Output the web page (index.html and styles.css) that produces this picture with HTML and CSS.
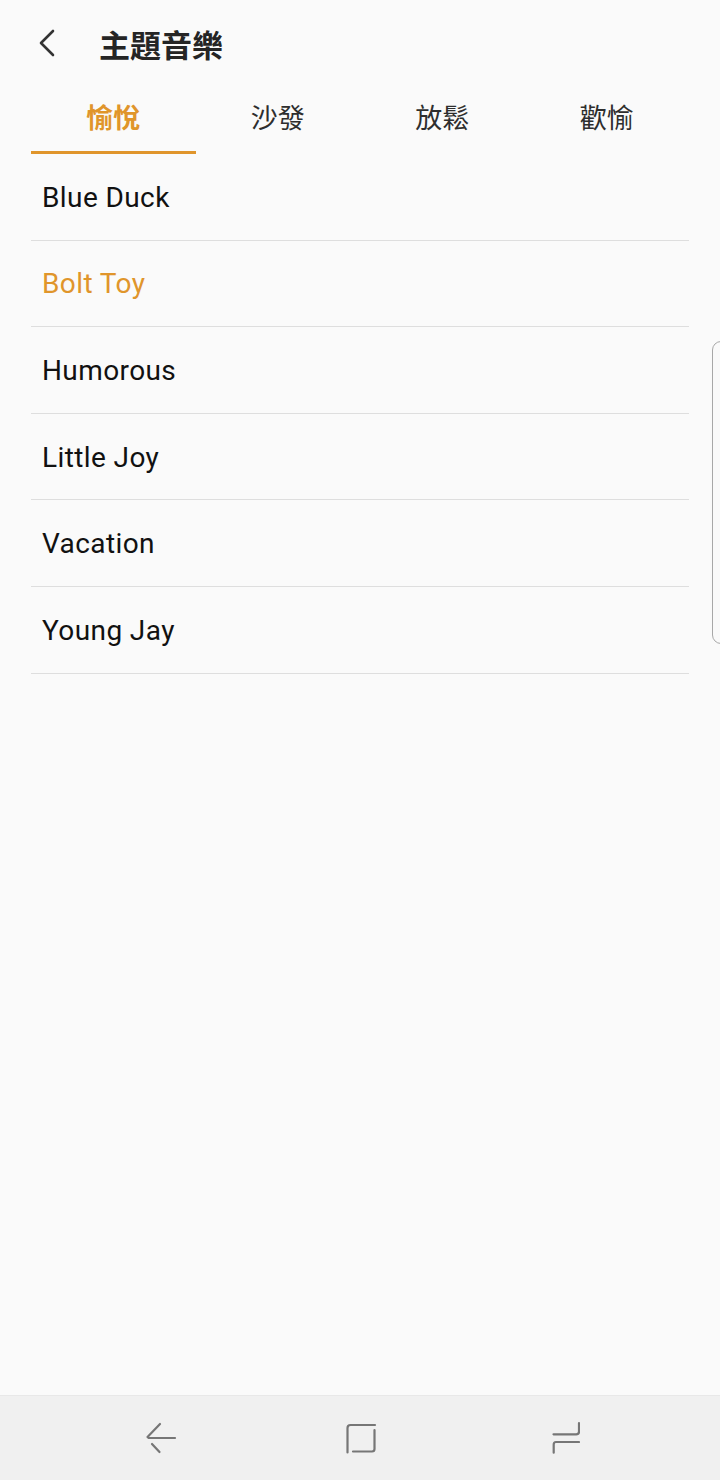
FILE: index.html
```html
<!DOCTYPE html>
<html lang="zh-Hant">
<head>
  <meta charset="UTF-8" />
  <meta name="viewport" content="width=device-width, initial-scale=1.0" />
  <title>主題音樂</title>
  <link rel="stylesheet" href="styles.css">
</head>
<body>
  <div class="screen">
    <header class="top-bar">
      <svg class="back" width="24" height="30" viewBox="0 0 24 30">
        <path d="M18 3 L6 15 L18 27" fill="none" stroke="#333" stroke-width="2.6" stroke-linecap="round" stroke-linejoin="round" />
      </svg>
      <h1 class="title">主題音樂</h1>
    </header>

    <nav class="tabs">
      <div class="tab active">愉悅</div>
      <div class="tab">沙發</div>
      <div class="tab">放鬆</div>
      <div class="tab">歡愉</div>
    </nav>

    <ul class="songs">
      <li>Blue Duck</li>
      <li class="playing">Bolt Toy</li>
      <li>Humorous</li>
      <li>Little Joy</li>
      <li>Vacation</li>
      <li>Young Jay</li>
    </ul>

    <div class="edge-handle"></div>

    <footer class="nav-bar">
      <div class="nav-cell">
        <svg width="40" height="40" viewBox="0 0 40 40">
          <path d="M20 6 L7.5 19 M8.5 20 H35 M12 26 L19.5 34" fill="none" stroke="#767676" stroke-width="2.2" stroke-linecap="round" />
        </svg>
      </div>
      <div class="nav-cell">
        <svg width="40" height="40" viewBox="0 0 40 40">
          <path d="M7.5 34.5 V10 Q7.5 7 10.5 7 H35 M34.5 12 V31 Q34.5 33.5 32 33.5 H13" fill="none" stroke="#767676" stroke-width="2.2" stroke-linecap="round" />
        </svg>
      </div>
      <div class="nav-cell">
        <svg width="40" height="40" viewBox="0 0 40 40">
          <path d="M39 5 V13.5 Q39 16.3 36.2 16.3 H13.5 M39 24 H16 Q13.7 24 13.7 26.5 V34.7" fill="none" stroke="#767676" stroke-width="2.2" stroke-linecap="round" />
        </svg>
      </div>
    </footer>
  </div>
</body>
</html>
```

FILE: styles.css
```css
body {
  margin: 0;
  background-color: #fafafa;
  font-family: Roboto, "Noto Sans CJK TC", sans-serif;
  color: #111;
}
.screen {
  position: relative;
  height: 1480px;
  display: flex;
  flex-direction: column;
}
.top-bar {
  height: 86px;
  display: flex;
  align-items: center;
  padding-left: 35px;
}
.back {
  margin-right: 40px;
}
.title {
  margin: 0;
  font-family: "Noto Sans CJK TC", sans-serif;
  font-size: 31px;
  font-weight: 700;
  color: #252525;
}
.tabs {
  display: flex;
  margin: 0 31px;
  height: 68px;
}
.tab {
  flex: 1;
  text-align: center;
  font-family: "Noto Sans CJK TC", sans-serif;
  font-size: 27px;
  color: #2e2e2e;
  padding-top: 11px;
  box-sizing: border-box;
  border-bottom: 3px solid transparent;
}
.tab.active {
  color: #e0952b;
  font-weight: 700;
  border-bottom-color: #e0952b;
}
.songs {
  list-style: none;
  margin: 0 31px;
  padding: 0;
}
.songs li {
  height: 86.6px;
  border-bottom: 1px solid #dedede;
  padding-left: 11px;
  padding-top: 1px;
  box-sizing: border-box;
  display: flex;
  align-items: center;
  font-size: 28px;
  letter-spacing: 0.4px;
}
.songs li.playing {
  color: #e0952b;
}
.edge-handle {
  position: absolute;
  left: 712px;
  top: 341px;
  width: 10px;
  height: 301px;
  border: 1px solid #a8a8a8;
  border-radius: 9px 0 0 9px;
}
.nav-bar {
  margin-top: auto;
  height: 84px;
  background-color: #f0f0f0;
  border-top: 1px solid #e8e8e8;
  display: flex;
  justify-content: center;
  align-items: center;
}
.nav-cell {
  width: 200px;
  display: flex;
  justify-content: center;
}
```
